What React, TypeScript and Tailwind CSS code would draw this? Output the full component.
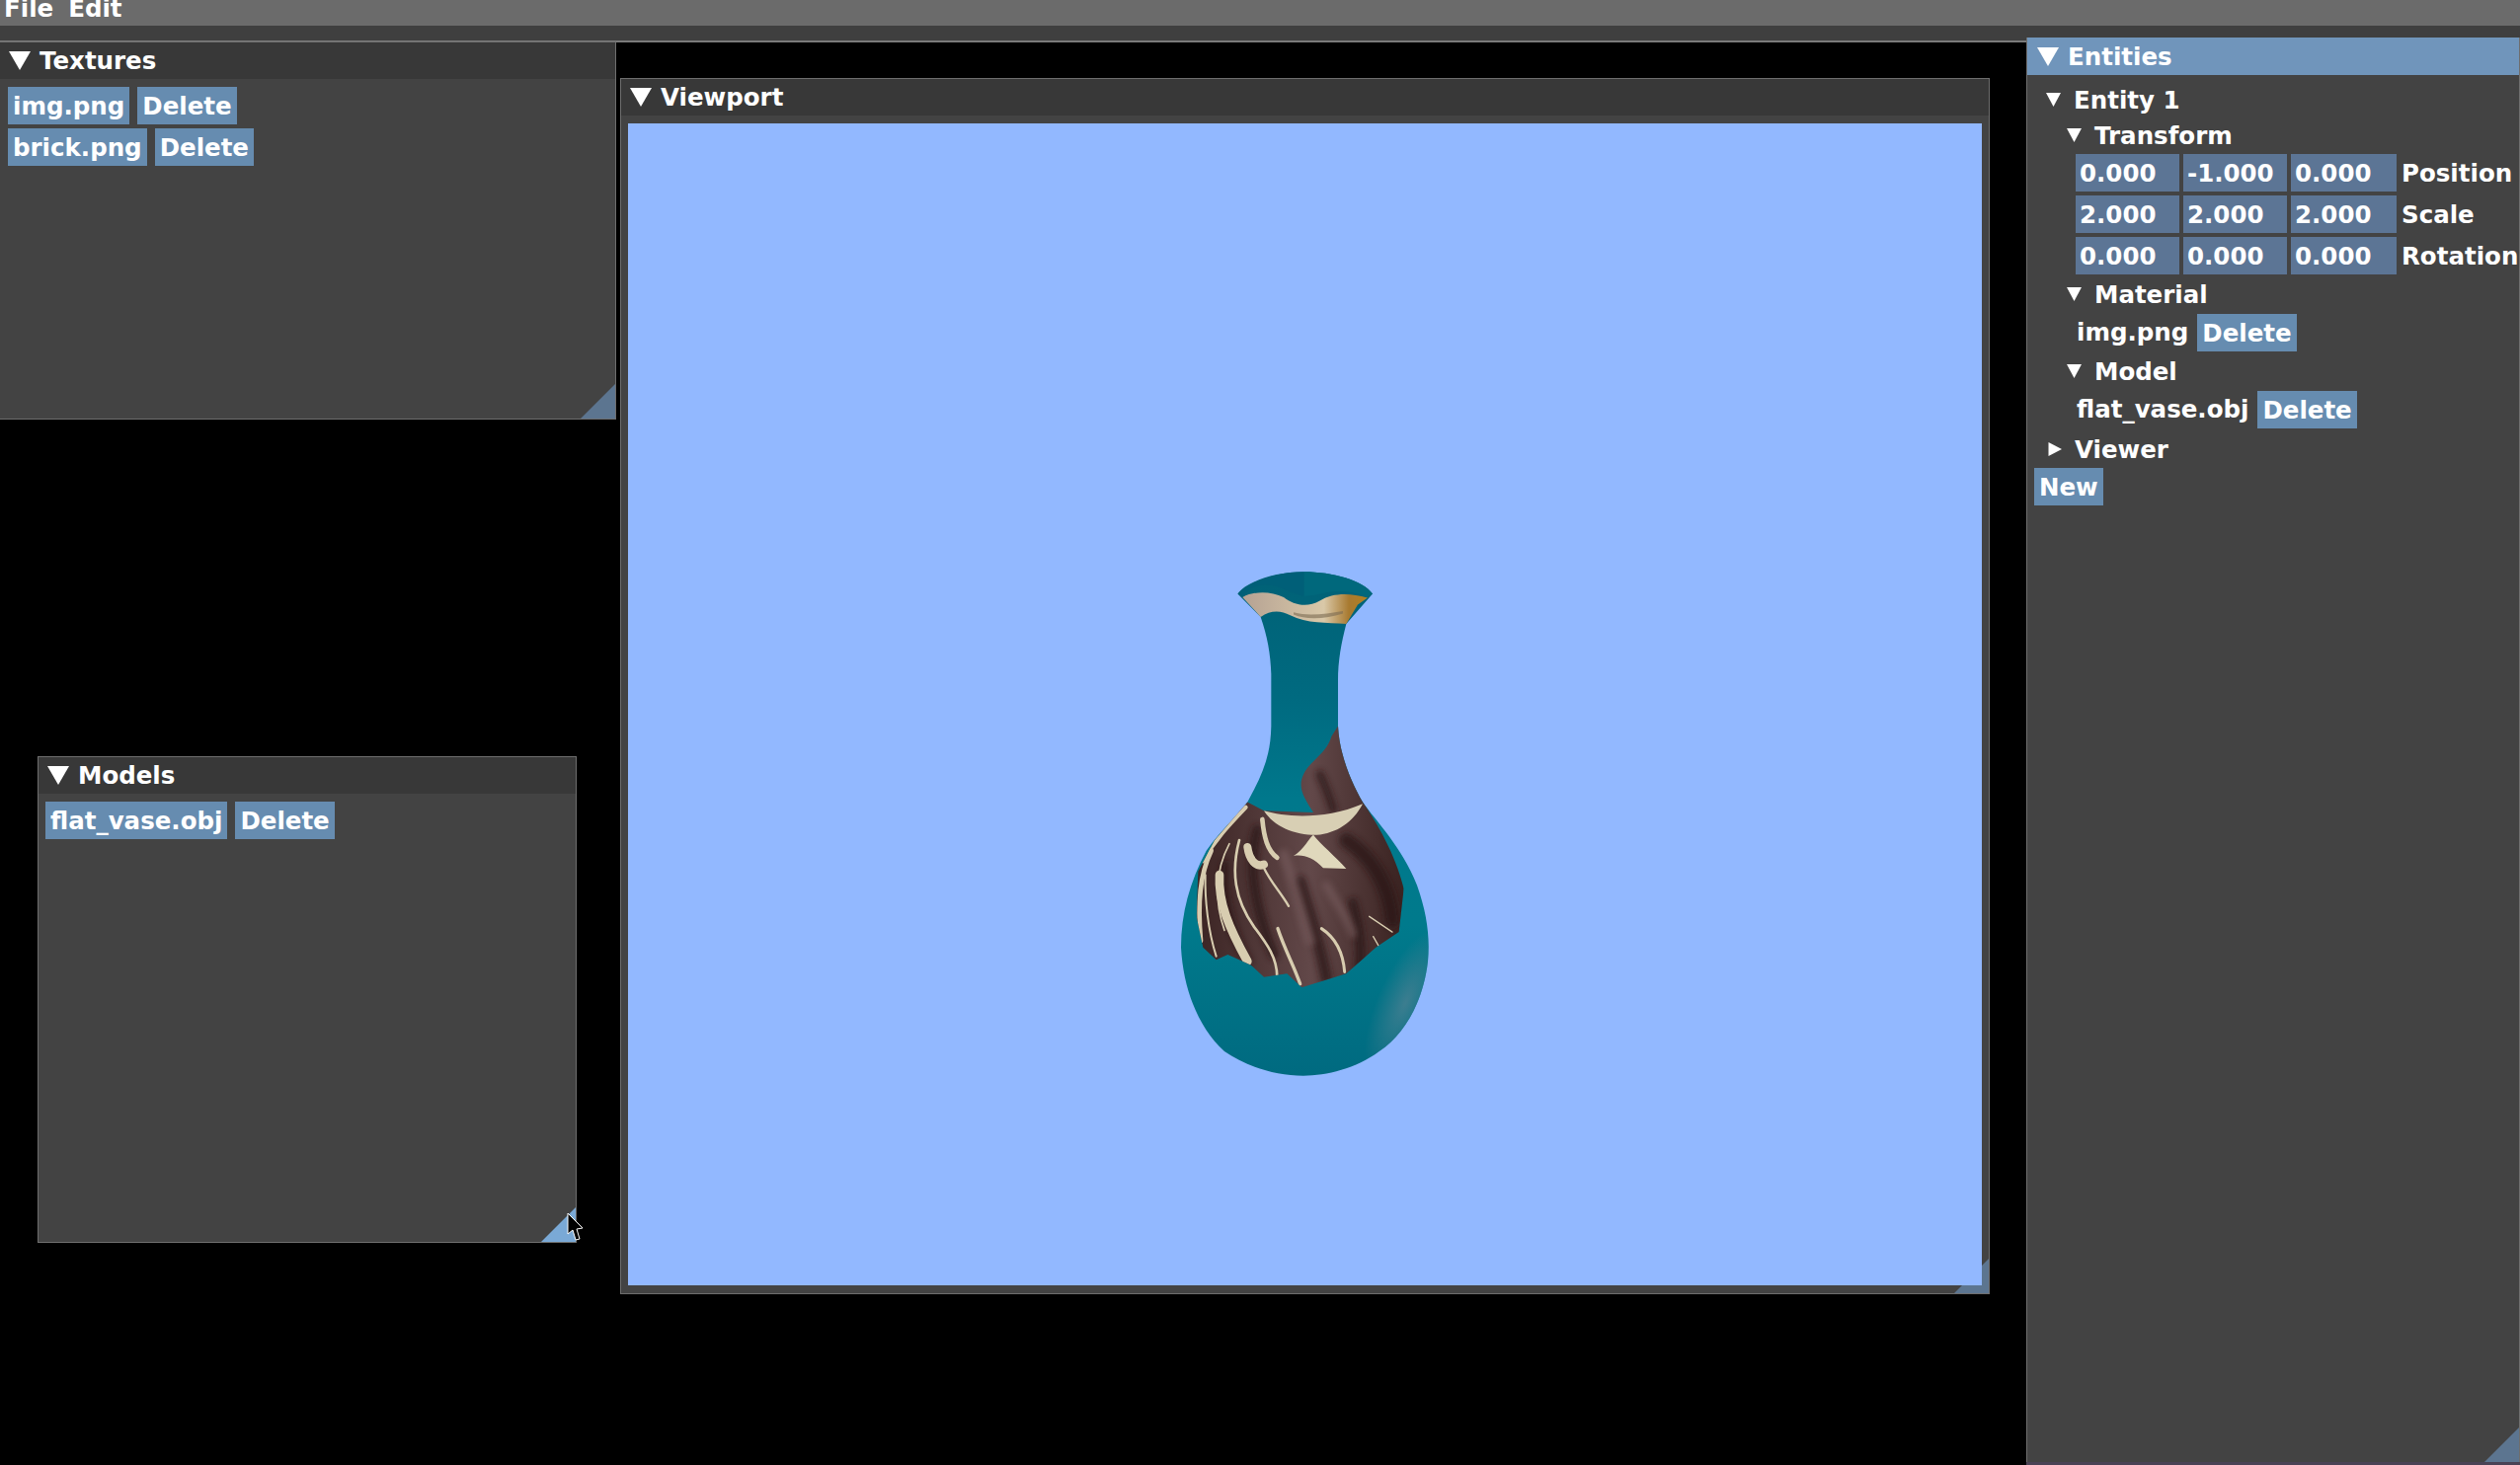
import React from 'react';

const Caret = ({ open = true, size = 'lg' }: { open?: boolean; size?: 'lg' | 'sm' }) => {
  const box = size === 'lg' ? 'w-[22px] h-[19px]' : 'w-[15px] h-[14px]';
  return (
    <svg viewBox="0 0 20 20" preserveAspectRatio="none" className={box + ' shrink-0 fill-white'}>
      {open ? <polygon points="0,0 20,0 10,20" /> : <polygon points="2,0 20,10 2,20" />}
    </svg>
  );
};

const Btn = ({ children }: { children: React.ReactNode }) => (
  <div className="h-[38px] px-[5px] pt-[2px] bg-[#668cb0] text-white flex items-center whitespace-nowrap">{children}</div>
);

const Field = ({ value, w }: { value: string; w: string }) => (
  <div className={'h-[38px] pl-[4px] pt-[2px] bg-[#5c7595] flex items-center ' + w}>{value}</div>
);

const Grip = ({ color }: { color: string }) => (
  <svg viewBox="0 0 35 35" className="absolute right-0 bottom-0 w-[35px] h-[35px]">
    <polygon points="35,0 35,35 0,35" fill={color} />
  </svg>
);

const Window = ({ title, className, children }: { title: string; className: string; children: React.ReactNode }) => (
  <section className={'absolute flex flex-col bg-[#434343] border border-[#6e6e6e] ' + className}>
    <header className="h-[37px] shrink-0 bg-[#383838] flex items-center pl-[9px] gap-[9px]">
      <Caret />
      <span className="pt-[1px]">{title}</span>
    </header>
    {children}
  </section>
);

const FileRow = ({ name }: { name: string }) => (
  <div className="flex gap-[8px]">
    <Btn>{name}</Btn>
    <Btn>Delete</Btn>
  </div>
);

const TreeRow = ({ label, indent, open = true }: { label: string; indent: string; open?: boolean }) => (
  <div className={'h-[36px] flex items-center gap-[13px] ' + indent}>
    <Caret open={open} size="sm" />
    <span className="pt-[1px]">{label}</span>
  </div>
);

const VectorRow = ({ values, label }: { values: string[]; label: string }) => (
  <div className="flex items-center gap-[4px] pl-[49px]">
    <Field value={values[0]} w="w-[105px]" />
    <Field value={values[1]} w="w-[105px]" />
    <Field value={values[2]} w="w-[107px]" />
    <span className="ml-[1px] pt-[2px] whitespace-nowrap">{label}</span>
  </div>
);

const bodyPath =
  'M370 118 C395 85 480 55 570 55 C660 55 750 80 780 118 L765 135 L700 205 C685 260 675 310 675 370 L675 500 C680 590 720 670 750 720 C790 775 870 850 915 960 C945 1040 955 1110 948 1180 C935 1290 880 1390 800 1440 C730 1490 640 1510 570 1510 C480 1510 390 1480 330 1440 C250 1370 205 1260 198 1140 C198 1040 225 950 275 860 C320 800 370 760 400 720 C445 640 470 590 472 500 L472 350 C470 290 460 240 440 185 Z';

const Vase = () => (
  <svg viewBox="0 0 1020 1568" preserveAspectRatio="none" className="absolute left-[494px] top-[435px] w-[340px] h-[550px]">
    <defs>
      <linearGradient id="body" x1="0" y1="0" x2="0" y2="1">
        <stop offset="0" stopColor="#006176" />
        <stop offset="0.25" stopColor="#006a80" />
        <stop offset="0.45" stopColor="#00788c" />
        <stop offset="0.7" stopColor="#007a8c" />
        <stop offset="1" stopColor="#006a80" />
      </linearGradient>
      <radialGradient id="sheen" cx="0.5" cy="0.5" r="0.5">
        <stop offset="0" stopColor="#3f7e90" stopOpacity="0.95" />
        <stop offset="1" stopColor="#3f7e90" stopOpacity="0" />
      </radialGradient>
      <linearGradient id="fur" x1="0" y1="0" x2="1" y2="0">
        <stop offset="0" stopColor="#3a2322" />
        <stop offset="0.55" stopColor="#624849" />
        <stop offset="1" stopColor="#38211f" />
      </linearGradient>
      <linearGradient id="lip" x1="0" y1="0" x2="1" y2="0">
        <stop offset="0" stopColor="#b5a293" />
        <stop offset="0.65" stopColor="#d9c8a8" />
        <stop offset="0.85" stopColor="#a87a30" />
        <stop offset="1" stopColor="#b08020" />
      </linearGradient>
      <filter id="soft">
        <feGaussianBlur stdDeviation="9" />
      </filter>
      <clipPath id="vaseClip">
        <path d={bodyPath} />
      </clipPath>
      <clipPath id="furClip">
        <path d="M400 720 L450 745 L600 750 C575 710 550 680 570 640 C590 600 640 580 655 530 L675 500 C680 590 720 670 750 720 C790 775 850 870 875 970 L860 1095 L790 1140 L700 1215 L565 1255 L520 1215 L450 1225 L410 1190 L340 1160 L305 1175 L265 1140 L245 1050 L250 920 L300 830 Z" />
      </clipPath>
    </defs>
    <path fill="url(#body)" d={bodyPath} />
    <g clipPath="url(#vaseClip)">
      <ellipse cx="880" cy="1300" rx="85" ry="230" fill="url(#sheen)" transform="rotate(25 880 1300)" />
    </g>
    <path fill="#005f78" d="M372 118 C400 88 480 55 572 55 L572 125 C530 120 500 90 450 92 C420 95 395 110 385 128 Z" />
    <path fill="#00687c" d="M572 55 C660 55 750 80 780 118 L765 128 C720 110 680 108 640 115 C610 122 590 125 572 125 Z" />
    <path
      fill="url(#lip)"
      d="M385 128 C420 110 470 110 510 128 C540 150 580 160 620 138 C660 115 710 115 765 130 L735 150 L700 205 C640 200 580 205 530 180 C500 165 470 165 440 185 Z"
    />
    <path fill="#7c6a52" opacity="0.6" d="M540 172 C590 185 640 175 690 168 L690 175 C640 190 580 195 540 178 Z" />
    <g clipPath="url(#furClip)">
      <rect x="230" y="490" width="660" height="780" fill="url(#fur)" />
      <g fill="none" stroke="#2c1819" strokeLinecap="round" opacity="0.75" filter="url(#soft)">
        <path strokeWidth="30" d="M430 800 C400 900 420 1020 480 1160" />
        <path strokeWidth="24" d="M330 900 C320 1000 350 1090 400 1180" />
        <path strokeWidth="34" d="M560 950 C590 1040 620 1130 640 1230" />
        <path strokeWidth="44" d="M700 830 C780 880 830 960 840 1060" />
        <path strokeWidth="30" d="M720 1010 C740 1080 750 1140 740 1200" />
        <path strokeWidth="24" d="M620 640 C640 680 650 710 660 740" />
      </g>
      <g fill="none" stroke="#7a5f60" strokeLinecap="round" opacity="0.6" filter="url(#soft)">
        <path strokeWidth="30" d="M510 870 C540 950 560 1030 590 1120" />
        <path strokeWidth="24" d="M640 960 C670 1010 700 1050 720 1100" />
      </g>
      <g fill="none" stroke="#d8cdb0" strokeLinecap="round">
        <path strokeWidth="14" d="M290 860 C255 930 248 1010 258 1120" />
        <path strokeWidth="6" d="M272 930 C270 1000 280 1090 305 1165" />
        <path strokeWidth="5" d="M345 840 C300 920 300 1010 330 1090" />
        <path strokeWidth="26" d="M315 930 C310 1010 345 1085 400 1180" />
        <path strokeWidth="8" d="M375 830 C350 920 360 1000 420 1080 C460 1130 490 1170 490 1225" />
        <path strokeWidth="24" d="M400 850 C405 885 425 910 450 900" />
        <path strokeWidth="7" d="M450 910 C470 950 500 980 525 1020" />
        <path strokeWidth="10" d="M492 1085 C515 1150 540 1190 560 1245" />
        <path strokeWidth="9" d="M625 1085 C665 1110 690 1150 695 1210" />
        <path strokeWidth="4" d="M770 1050 L840 1095" />
        <path strokeWidth="4" d="M782 1108 L800 1138" />
        <path strokeWidth="14" d="M445 770 C450 820 460 860 490 880" />
        <path strokeWidth="12" d="M395 735 C340 790 300 830 265 890" />
      </g>
    </g>
    <path fill="#d8cfb4" d="M450 745 C520 765 640 770 750 725 C720 780 670 810 610 815 C540 815 480 790 450 745 Z" />
    <path fill="#e0d8bc" d="M540 875 C570 860 590 820 600 815 C620 840 670 880 700 912 L630 910 C600 880 570 870 540 875 Z" />
  </svg>
);

export default function App() {
  return (
    <div className="relative w-[2552px] h-[1484px] bg-black overflow-hidden text-white font-['DejaVu_Sans','Liberation_Sans',sans-serif] font-bold text-[24.5px] leading-[36px]">
      <nav className="h-[26px] bg-[#6b6b6b] flex items-start gap-[15px] pl-[4px]">
        <span className="leading-[18px]">File</span>
        <span className="leading-[18px]">Edit</span>
      </nav>
      <div className="h-[17px] bg-[#3f3f3f] border-b-2 border-[#7a7a7a]" />

      <Window title="Textures" className="left-[-1px] top-[42px] w-[625px] h-[383px]">
        <div className="flex flex-col gap-[4px] pt-[8px] pl-[8px]">
          <FileRow name="img.png" />
          <FileRow name="brick.png" />
        </div>
        <Grip color="#5c7590" />
      </Window>

      <Window title="Viewport" className="left-[628px] top-[79px] w-[1387px] h-[1232px]">
        <div className="relative ml-[7px] mt-[8px] w-[1371px] h-[1177px] bg-[#92b8ff] z-10">
          <Vase />
        </div>
        <Grip color="#5c7590" />
      </Window>

      <Window title="Models" className="left-[38px] top-[766px] w-[546px] h-[493px]">
        <div className="pt-[8px] pl-[7px]">
          <FileRow name="flat_vase.obj" />
        </div>
        <Grip color="#7aa9d6" />
      </Window>

      <aside className="absolute left-[2052px] top-[38px] w-[500px] h-[1443px] bg-[#434343] border-x border-[#6e6e6e] flex flex-col">
        <header className="h-[38px] shrink-0 bg-[#7095bb] flex items-center pl-[10px] gap-[9px]">
          <Caret />
          <span className="pt-[1px]">Entities</span>
        </header>
        <div className="flex flex-col pt-[7px]">
          <TreeRow label="Entity 1" indent="pl-[19px]" />
          <TreeRow label="Transform" indent="pl-[40px]" />
          <div className="flex flex-col gap-[4px] mt-[1px]">
            <VectorRow values={['0.000', '-1.000', '0.000']} label="Position" />
            <VectorRow values={['2.000', '2.000', '2.000']} label="Scale" />
            <VectorRow values={['0.000', '0.000', '0.000']} label="Rotation" />
          </div>
          <div className="mt-[2px]">
            <TreeRow label="Material" indent="pl-[40px]" />
          </div>
          <div className="mt-[2px] flex items-center gap-[9px] pl-[50px]">
            <span className="pb-[1px]">img.png</span>
            <Btn>Delete</Btn>
          </div>
          <div className="mt-[2px]">
            <TreeRow label="Model" indent="pl-[40px]" />
          </div>
          <div className="mt-[2px] flex items-center gap-[9px] pl-[50px]">
            <span className="pb-[1px]">flat_vase.obj</span>
            <Btn>Delete</Btn>
          </div>
          <div className="mt-[3px]">
            <TreeRow label="Viewer" indent="pl-[20px]" open={false} />
          </div>
          <div className="mt-[1px] pl-[7px] flex">
            <Btn>New</Btn>
          </div>
        </div>
        <Grip color="#5c7590" />
      </aside>
      <div className="absolute left-[2052px] top-[1481px] w-[500px] h-[3px] bg-[#4a4255]" />

      <svg viewBox="0 0 18 30" className="absolute left-[574px] top-[1228px] w-[18px] h-[30px]">
        <path d="M1 1 L1 22 L6 18 L9 28 L13 27 L10 17 L16 16 Z" fill="#000" stroke="#fff" strokeWidth="1" />
      </svg>
    </div>
  );
}
